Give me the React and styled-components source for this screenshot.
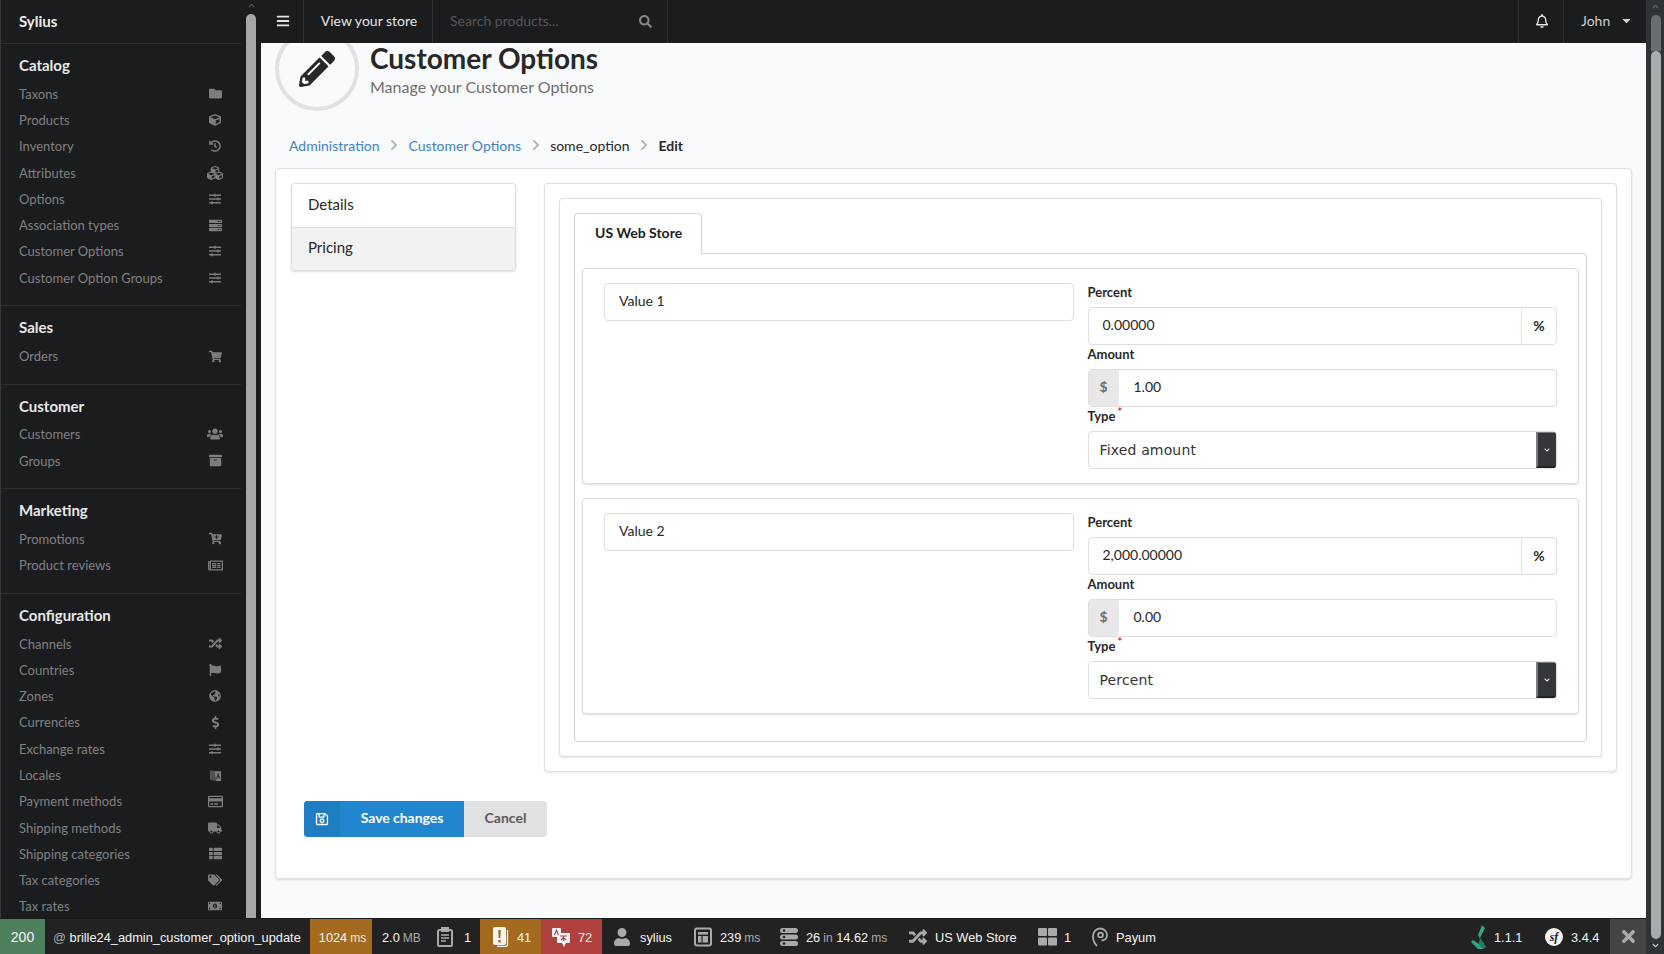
import React from "react";
import styled, { createGlobalStyle } from "styled-components";
import {
  FaFolder, FaCube, FaHistory, FaCubes, FaSlidersH, FaServer, FaShoppingCart, FaUsers, FaArchive,
  FaCartPlus, FaRegNewspaper, FaRandom, FaFlag, FaGlobeAmericas, FaDollarSign,
  FaRegCreditCard, FaTruck, FaThList, FaTags, FaMoneyBillAlt, FaBars, FaSearch, FaRegBell,
  FaCaretDown, FaPencilAlt, FaRegSave, FaChevronRight, FaChevronUp, FaChevronDown, FaUser,
  FaTimes,
} from "react-icons/fa";

const LocaleIcon = () => (
  <svg width="1em" height="1em" viewBox="0 0 14 14" fill="currentColor">
    <path d="M1 1l6 1.5V13L1 11.5z" opacity="0.55" />
    <path d="M6 2.5h7V13H7.5z" />
    <path d="M8.2 10.5l1.6-5.5 1.6 5.5M8.9 8.6h1.9" fill="none" stroke="#1b1c1d" strokeWidth="0.9" />
  </svg>
);

const sections = [
  {
    title: "Catalog",
    items: [
      ["Taxons", FaFolder, 13], ["Products", FaCube, 12], ["Inventory", FaHistory, 12], ["Attributes", FaCubes, 16],
      ["Options", FaSlidersH, 12], ["Association types", FaServer, 13], ["Customer Options", FaSlidersH, 12],
      ["Customer Option Groups", FaSlidersH, 12],
    ],
  },
  { title: "Sales", items: [["Orders", FaShoppingCart, 13]] },
  { title: "Customer", items: [["Customers", FaUsers, 16], ["Groups", FaArchive, 13]] },
  { title: "Marketing", items: [["Promotions", FaCartPlus, 13], ["Product reviews", FaRegNewspaper, 15]] },
  {
    title: "Configuration",
    items: [
      ["Channels", FaRandom, 13], ["Countries", FaFlag, 12], ["Zones", FaGlobeAmericas, 12], ["Currencies", FaDollarSign, 13],
      ["Exchange rates", FaSlidersH, 12], ["Locales", LocaleIcon, 13], ["Payment methods", FaRegCreditCard, 15],
      ["Shipping methods", FaTruck, 14], ["Shipping categories", FaThList, 13], ["Tax categories", FaTags, 14],
      ["Tax rates", FaMoneyBillAlt, 14],
    ],
  },
];

const values = [
  { name: "Value 1", percent: "0.00000", amount: "1.00", type: "Fixed amount" },
  { name: "Value 2", percent: "2,000.00000", amount: "0.00", type: "Percent" },
];

const GlobalStyle = createGlobalStyle`
  html, body {
    margin: 0;
    height: 100%;
    overflow: hidden;
  }
  body {
    font-family: Lato, "Liberation Sans", sans-serif;
    font-size: 14px;
    color: #282828;
  }
  * {
    box-sizing: border-box;
  }
`;

const Page = styled.div`
  display: flex;
  width: 1664px;
  height: 954px;
`;

const Column = styled.div`
  display: flex;
  flex-direction: column;
  flex: 1;
  min-width: 0;
`;

const Body = styled.div`
  display: flex;
  flex: 1;
  min-height: 0;
`;

const Sidebar = styled.aside`
  display: flex;
  flex: 0 0 261px;
  background: #1b1c1d;
  border-left: 1px solid #34373b;
  overflow: hidden;
`;

const Nav = styled.nav`
  flex: 0 0 240px;
`;

const Brand = styled.div`
  height: 43px;
  padding: 0 18px;
  font-weight: 700;
  font-size: 15px;
  line-height: 43px;
  color: #eee;
`;

const Section = styled.div`
  height: ${(p) => 52 + p.$count * 26.3}px;
  padding: 10px 18px 0;
  border-top: 1px solid #2b2d2f;
`;

const SectionTitle = styled.div`
  height: 22px;
  margin-bottom: 4.5px;
  font-weight: 700;
  font-size: 15px;
  line-height: 22px;
  color: #e8e8e8;
`;

const NavItem = styled.div`
  display: flex;
  align-items: center;
  justify-content: space-between;
  height: 26.3px;
  font-size: 13px;
  color: #808182;
`;

const NavIcon = styled.span`
  display: flex;
  justify-content: center;
  width: 16px;
  font-size: ${(p) => p.$size}px;
  color: #7c7d7e;
`;

const SideTrack = styled.div`
  display: flex;
  flex-direction: column;
  align-items: center;
  flex: 1;
  padding: 2px 0 0;
`;

const Arrow = styled.div`
  display: flex;
  justify-content: center;
  height: 12px;
  font-size: 7px;
  color: ${(p) => p.$color};
`;

const SideThumb = styled.div`
  flex: 1;
  width: 10px;
  border-radius: 5px 5px 0 0;
  background: #a5a8a8;
`;

const Main = styled.div`
  display: flex;
  flex-direction: column;
  flex: 1;
  min-width: 0;
  overflow: hidden;
  background: #f9fafc;
`;

const TopBar = styled.header`
  position: relative;
  z-index: 1;
  display: flex;
  flex: 0 0 43px;
  align-items: stretch;
  background: #1b1c1d;
  color: #e6e6e6;
`;

const TopCell = styled.div`
  display: flex;
  align-items: center;
  justify-content: ${(p) => p.$justify || "flex-start"};
  width: ${(p) => p.$w}px;
  padding: 0 0 2px ${(p) => p.$pad || 0}px;
  border-right: ${(p) => (p.$noBorder ? "none" : "1px solid #2e3032")};
`;

const SearchText = styled.span`
  flex: 1;
  color: #565759;
`;

const SearchIcon = styled(FaSearch)`
  margin: 2px 15px 0 0;
  color: #858687;
  font-size: 13px;
`;

const TopSpacer = styled.div`
  flex: 1;
  border-right: 1px solid #2e3032;
`;

const JohnText = styled.span`
  color: #cfcfcf;
`;

const Caret = styled(FaCaretDown)`
  margin-left: 10px;
  font-size: 13px;
  color: #cfcfcf;
`;

const Content = styled.div`
  flex: 1;
  padding: 0 14px 0 14px;
`;

const Header = styled.div`
  display: flex;
  align-items: flex-start;
  gap: 11px;
  margin-top: -16px;
`;

const HeaderCircle = styled.div`
  display: flex;
  align-items: center;
  justify-content: center;
  flex: 0 0 84px;
  height: 84px;
  border: 4px solid #e0e1e2;
  border-radius: 50%;
  font-size: 36px;
  color: #282828;
`;

const HeaderText = styled.div`
  padding-top: 14px;
`;

const Title = styled.h1`
  margin: 0;
  font-size: 28px;
  font-weight: 700;
  line-height: 34px;
  color: #282828;
`;

const Subtitle = styled.div`
  font-size: 16px;
  line-height: 24px;
  color: #6f6f6f;
`;

const Breadcrumb = styled.div`
  display: flex;
  align-items: center;
  gap: 8.5px;
  height: 20px;
  margin: 25px 0 12px;
  padding: 0 0 2px 14px;
`;

const Crumb = styled.span`
  color: ${(p) => (p.$link ? "#4183c4" : "#282828")};
  font-weight: ${(p) => (p.$bold ? 700 : 400)};
`;

const CrumbSep = styled(FaChevronRight)`
  color: #b5b5b5;
  font-size: 12px;
`;

const Card = styled.div`
  height: 711px;
  padding: 14px 14px 0 15px;
  background: #fff;
  border: 1px solid #dfe0e1;
  border-radius: 4px;
  box-shadow: 0 1px 2px rgba(34, 36, 38, 0.15);
`;

const CardGrid = styled.div`
  display: flex;
  align-items: flex-start;
  gap: 28px;
`;

const Menu = styled.div`
  flex: 0 0 225px;
  background: #fff;
  border: 1px solid #dededf;
  border-radius: 4px;
  box-shadow: 0 1px 2px rgba(34, 36, 38, 0.15);
  overflow: hidden;
`;

const MenuItem = styled.div`
  height: 43px;
  padding-left: 16px;
  font-size: 15px;
  line-height: ${(p) => (p.$active ? 38 : 40)}px;
  background: ${(p) => (p.$active ? "#f2f2f3" : "#fff")};
  border-top: ${(p) => (p.$active ? "1px solid #dededf" : "none")};
`;

const Segment = styled.div`
  flex: 1;
  padding: 14px;
  background: #fff;
  border: 1px solid #dededf;
  border-radius: 4px;
  box-shadow: 0 1px 2px rgba(34, 36, 38, 0.1);
`;

const Tab = styled.div`
  position: relative;
  z-index: 1;
  width: 128px;
  height: 41px;
  margin-bottom: -1px;
  padding-left: 20px;
  font-weight: 700;
  line-height: 38px;
  color: #1b1c1d;
  background: #fff;
  border: 1px solid #d4d4d5;
  border-bottom: none;
  border-radius: 4px 4px 0 0;
`;

const TabPanel = styled.div`
  display: flex;
  flex-direction: column;
  gap: 14px;
  padding: 14px 7px 27px;
  border: 1px solid #d4d4d5;
  border-radius: 0 4px 4px 4px;
`;

const ValueRow = styled.div`
  display: flex;
  align-items: flex-start;
  gap: 14px;
  height: 216px;
  padding: 14px 21px;
  border: 1px solid #dededf;
  border-radius: 4px;
  box-shadow: 0 1px 2px rgba(34, 36, 38, 0.15);
`;

const Half = styled.div`
  flex: 1;
  min-width: 0;
`;

const Field = styled.div`
  display: flex;
  align-items: center;
  height: 38px;
  background: #fff;
  border: 1px solid #dedede;
  border-radius: 4px;
  overflow: hidden;
`;

const FieldText = styled.span`
  flex: 1;
  padding: 0 0 3px ${(p) => p.$pad || 0}px;
`;

const Label = styled.div`
  height: 18px;
  margin-bottom: 6px;
  font-size: 13px;
  font-weight: 700;
  line-height: 18px;
  color: #282828;
`;

const Required = styled.sup`
  margin-left: 2px;
  font-size: 11px;
  line-height: 0;
  color: #db2828;
`;

const Suffix = styled.span`
  display: flex;
  align-items: center;
  justify-content: center;
  align-self: stretch;
  width: 35px;
  padding-bottom: 2px;
  font-weight: 700;
  border-left: 1px solid #e3e3e3;
`;

const Prefix = styled.span`
  display: flex;
  align-items: center;
  justify-content: center;
  align-self: stretch;
  width: 30px;
  padding-bottom: 3px;
  font-weight: 700;
  color: #6f6f6f;
  background: #e8e8e8;
`;

const SelectText = styled.span`
  flex: 1;
  padding-left: 11px;
  font-family: "DejaVu Sans", sans-serif;
  font-size: 14px;
  letter-spacing: 0.15px;
  color: #333;
`;

const SelectButton = styled.span`
  display: flex;
  align-items: center;
  justify-content: center;
  align-self: stretch;
  width: 20px;
  font-size: 6px;
  color: #fff;
  background: #33373b;
  border-left: 2px solid #7a7c7e;
  border-top: 1px solid #7a7c7e;
  border-bottom: 2px solid #222;
`;

const Actions = styled.div`
  display: flex;
  margin: 29px 0 0 13px;
  height: 36px;
`;

const SaveButton = styled.div`
  display: flex;
  align-items: stretch;
  width: 160px;
  font-weight: 700;
  color: #fff;
  background: #2185d0;
  border-radius: 4px 0 0 4px;
  overflow: hidden;
`;

const SaveIcon = styled.span`
  display: flex;
  align-items: center;
  justify-content: center;
  flex: 0 0 36px;
  font-size: 14px;
  background: #1f7dc3;
`;

const SaveLabel = styled.span`
  flex: 1;
  text-align: center;
  line-height: 34px;
  letter-spacing: -0.05px;
`;

const CancelButton = styled.div`
  width: 83px;
  font-weight: 700;
  text-align: center;
  line-height: 34px;
  color: #5a5a5a;
  background: #e0e1e2;
  border-radius: 0 4px 4px 0;
`;

const Toolbar = styled.footer`
  display: flex;
  flex: 0 0 36px;
  font-family: "Liberation Sans", Arial, sans-serif;
  font-size: 12.8px;
  color: #f5f5f5;
  background: #222;
  border-top: 1px solid #1a1a1a;
`;

const Block = styled.div`
  display: flex;
  align-items: center;
  justify-content: ${(p) => p.$justify || "flex-start"};
  gap: ${(p) => p.$gap || 0}px;
  flex: 0 0 ${(p) => p.$w}px;
  padding-top: 1px;
  padding-left: ${(p) => p.$pad || 0}px;
  background: ${(p) => p.$bg || "transparent"};
  white-space: nowrap;
`;

const StatusBlock = styled(Block)`
  font-size: 14px;
`;

const ToolbarSpacer = styled.div`
  flex: 1;
`;

const Unit = styled.span`
  margin-left: 3px;
  font-size: 12px;
  color: ${(p) => p.$color || "#aaa"};
`;

const Muted = styled.span`
  color: #aaa;
`;

const ToolIcon = styled.span`
  display: flex;
  align-items: center;
  justify-content: center;
  width: 20px;
  font-size: 18px;
  color: #aaa;
`;

const SfBadge = styled.span`
  display: flex;
  align-items: center;
  justify-content: center;
  width: 18px;
  height: 18px;
  border-radius: 50%;
  font-family: "Liberation Serif", serif;
  font-size: 12px;
  font-style: italic;
  font-weight: 700;
  color: #222;
  background: #f5f5f5;
`;

const CloseCell = styled.div`
  display: flex;
  align-items: center;
  justify-content: center;
  flex: 0 0 36px;
  font-size: 19px;
  color: #aaa;
  background: #444;
`;

const PageTrack = styled.div`
  display: flex;
  flex-direction: column;
  align-items: center;
  flex: 0 0 18px;
  padding: 3px 0 0 1px;
  background: #2f3337;
`;

const PageThumbTop = styled.div`
  flex: 0 0 36px;
  width: 10px;
  border-radius: 5px 5px 0 0;
  background: #6a6e70;
`;

const PageThumb = styled.div`
  flex: 1;
  width: 10px;
  margin-bottom: 3px;
  border-radius: 5px;
  background: #a9acad;
`;

const ClipboardIcon = () => (
  <svg width="16" height="20" viewBox="0 0 16 20" fill="none" stroke="#aaa" strokeWidth="2">
    <rect x="1" y="3" width="14" height="16" rx="1.5" />
    <rect x="5" y="1" width="6" height="3" fill="#aaa" />
    <path d="M4 8h8M4 11h8M4 14h5" strokeWidth="1.6" />
  </svg>
);

const WarningIcon = () => (
  <svg width="18" height="20" viewBox="0 0 18 20">
    <path d="M3 0h9a2 2 0 0 1 2 2v14a2 2 0 0 1-2 2H3a2 2 0 0 1-2-2V2a2 2 0 0 1 2-2z" fill="#f5f5f5" />
    <path d="M15.5 3v15a2 2 0 0 1-2 1.5H5" fill="none" stroke="#f5f5f5" strokeWidth="1.3" />
    <path d="M6.2 3h2.6l-.4 8H6.6zM6.3 13h2.4v2.4H6.3z" fill="#a46a1f" />
  </svg>
);

const TranslateIcon = () => (
  <svg width="20" height="20" viewBox="0 0 20 20">
    <rect x="1" y="1" width="9" height="9" rx="1" fill="#f5f5f5" />
    <rect x="6" y="6" width="13" height="10" rx="1" fill="#f5f5f5" />
    <path d="M11 16l2 4 2-4z" fill="#f5f5f5" />
    <path d="M3.5 8l2-5 2 5M9 9h7M12.5 9v5M10 13l2-2M15 13l-2-2" stroke="#b0413e" strokeWidth="1.1" fill="none" />
  </svg>
);

const TemplateIcon = () => (
  <svg width="18" height="20" viewBox="0 0 18 20" fill="none" stroke="#aaa" strokeWidth="2">
    <rect x="1" y="1.5" width="16" height="17" rx="2" />
    <rect x="4" y="5" width="10" height="2.6" fill="#aaa" stroke="none" />
    <rect x="4" y="9" width="3.4" height="6.5" fill="#aaa" stroke="none" />
    <rect x="8.6" y="9" width="5.4" height="6.5" fill="#aaa" stroke="none" />
  </svg>
);

const DatabaseIcon = () => (
  <svg width="18" height="20" viewBox="0 0 18 20" fill="#aaa">
    <rect x="0" y="1" width="18" height="5" rx="2.5" />
    <rect x="0" y="7.5" width="18" height="5" rx="2.5" />
    <rect x="0" y="14" width="18" height="5" rx="2.5" />
    <circle cx="4" cy="3.5" r="1.3" fill="#222" />
    <circle cx="4" cy="10" r="1.3" fill="#222" />
    <circle cx="4" cy="16.5" r="1.3" fill="#222" />
  </svg>
);

const GridIcon = () => (
  <svg width="19" height="18" viewBox="0 0 19 18" fill="#aaa">
    <rect x="0" y="0" width="9" height="8" rx="1" />
    <rect x="10" y="0" width="9" height="8" rx="1" />
    <rect x="0" y="9.5" width="9" height="8" rx="1" />
    <rect x="10" y="9.5" width="9" height="8" rx="1" />
  </svg>
);

const PayumIcon = () => (
  <svg width="16" height="20" viewBox="0 0 16 20" fill="none" stroke="#aaa" strokeWidth="1.8">
    <path d="M5 19C2 16 1 13 1 9.5 1 5 4 1.5 8 1.5s7 3 7 6.5-2.5 5.5-5.5 5.5" />
    <circle cx="8.5" cy="8" r="2.4" />
  </svg>
);

const SyliusLogo = () => (
  <svg width="18" height="24" viewBox="0 0 18 24">
    <path d="M12 0l3 3-5 10 6 9-3 2H8L1 17l2-2 6 4 1-5-2-4z" fill="#2fa585" />
    <path d="M10 14l6 8-3 2-4-5z" fill="#1f7d65" />
  </svg>
);

const Sidenav = () => (
  <Sidebar>
    <Nav>
      <Brand>Sylius</Brand>
      {sections.map((section) => (
        <Section key={section.title} $count={section.items.length}>
          <SectionTitle>{section.title}</SectionTitle>
          {section.items.map(([label, Icon, size]) => (
            <NavItem key={label}>
              {label}
              <NavIcon $size={size}>
                <Icon />
              </NavIcon>
            </NavItem>
          ))}
        </Section>
      ))}
    </Nav>
    <SideTrack>
      <Arrow $color="#55585a">
        <FaChevronUp />
      </Arrow>
      <SideThumb />
    </SideTrack>
  </Sidebar>
);

const ValueCard = ({ value }) => (
  <ValueRow>
    <Half>
      <Field>
        <FieldText $pad={14}>{value.name}</FieldText>
      </Field>
    </Half>
    <Half>
      <Label>Percent</Label>
      <Field>
        <FieldText $pad={14}>{value.percent}</FieldText>
        <Suffix>%</Suffix>
      </Field>
      <Label>Amount</Label>
      <Field>
        <Prefix>$</Prefix>
        <FieldText $pad={15}>{value.amount}</FieldText>
      </Field>
      <Label>
        Type<Required>*</Required>
      </Label>
      <Field>
        <SelectText>{value.type}</SelectText>
        <SelectButton>
          <FaChevronDown />
        </SelectButton>
      </Field>
    </Half>
  </ValueRow>
);

const DebugToolbar = () => (
  <Toolbar>
    <StatusBlock $w={45} $bg="#4f805d" $justify="center">200</StatusBlock>
    <Block $w={265} $pad={8}>
      <Muted>@&nbsp;</Muted>brille24_admin_customer_option_update
    </Block>
    <Block $w={62} $pad={3} $bg="#a46a1f" $justify="center">
      <span>1024<Unit $color="#f5e6d0">ms</Unit></span>
    </Block>
    <Block $w={56} $pad={10}>
      <span>2.0<Unit>MB</Unit></span>
    </Block>
    <Block $w={52} $pad={9} $gap={11}><ClipboardIcon />1</Block>
    <Block $w={61} $bg="#a46a1f" $pad={12} $gap={7}><WarningIcon />41</Block>
    <Block $w={61} $bg="#b0413e" $pad={10} $gap={7}><TranslateIcon />72</Block>
    <Block $w={80} $pad={10} $gap={8}>
      <ToolIcon><FaUser /></ToolIcon>sylius
    </Block>
    <Block $w={88} $pad={12} $gap={8}>
      <TemplateIcon />
      <span>239<Unit>ms</Unit></span>
    </Block>
    <Block $w={127} $pad={10} $gap={8}>
      <DatabaseIcon />
      <span>26<Unit>in</Unit> 14.62<Unit>ms</Unit></span>
    </Block>
    <Block $w={138} $pad={11} $gap={7}>
      <ToolIcon><FaRandom /></ToolIcon>US Web Store
    </Block>
    <Block $w={47} $pad={3} $gap={7}><GridIcon />1</Block>
    <Block $w={88} $pad={10} $gap={8}><PayumIcon />Payum</Block>
    <ToolbarSpacer />
    <Block $w={74} $pad={8} $gap={6}><SyliusLogo />1.1.1</Block>
    <Block $w={74} $pad={9} $gap={8}><SfBadge>sf</SfBadge>3.4.4</Block>
    <CloseCell><FaTimes /></CloseCell>
  </Toolbar>
);

export default function App() {
  return (
    <Page>
      <GlobalStyle />
      <Column>
        <Body>
          <Sidenav />
          <Main>
            <TopBar>
              <TopCell $w={43} $pad={2} $justify="center"><FaBars /></TopCell>
              <TopCell $w={129} $pad={2} $justify="center">View your store</TopCell>
              <TopCell $w={235} $pad={17}>
                <SearchText>Search products...</SearchText>
                <SearchIcon />
              </TopCell>
              <TopSpacer />
              <TopCell $w={45} $pad={2} $justify="center"><FaRegBell /></TopCell>
              <TopCell $w={82} $pad={17} $noBorder>
                <JohnText>John</JohnText>
                <Caret />
              </TopCell>
            </TopBar>
            <Content>
              <Header>
                <HeaderCircle><FaPencilAlt /></HeaderCircle>
                <HeaderText>
                  <Title>Customer Options</Title>
                  <Subtitle>Manage your Customer Options</Subtitle>
                </HeaderText>
              </Header>
              <Breadcrumb>
                <Crumb $link>Administration</Crumb>
                <CrumbSep />
                <Crumb $link>Customer Options</Crumb>
                <CrumbSep />
                <Crumb>some_option</Crumb>
                <CrumbSep />
                <Crumb $bold>Edit</Crumb>
              </Breadcrumb>
              <Card>
                <CardGrid>
                  <Menu>
                    <MenuItem>Details</MenuItem>
                    <MenuItem $active>Pricing</MenuItem>
                  </Menu>
                  <Segment>
                    <Segment>
                      <Tab>US Web Store</Tab>
                      <TabPanel>
                        {values.map((value) => (
                          <ValueCard key={value.name} value={value} />
                        ))}
                      </TabPanel>
                    </Segment>
                  </Segment>
                </CardGrid>
                <Actions>
                  <SaveButton>
                    <SaveIcon><FaRegSave /></SaveIcon>
                    <SaveLabel>Save changes</SaveLabel>
                  </SaveButton>
                  <CancelButton>Cancel</CancelButton>
                </Actions>
              </Card>
            </Content>
          </Main>
        </Body>
        <DebugToolbar />
      </Column>
      <PageTrack>
        <Arrow $color="#6a6e70"><FaChevronUp /></Arrow>
        <PageThumbTop />
        <PageThumb />
        <Arrow $color="#ddd"><FaChevronDown /></Arrow>
      </PageTrack>
    </Page>
  );
}
